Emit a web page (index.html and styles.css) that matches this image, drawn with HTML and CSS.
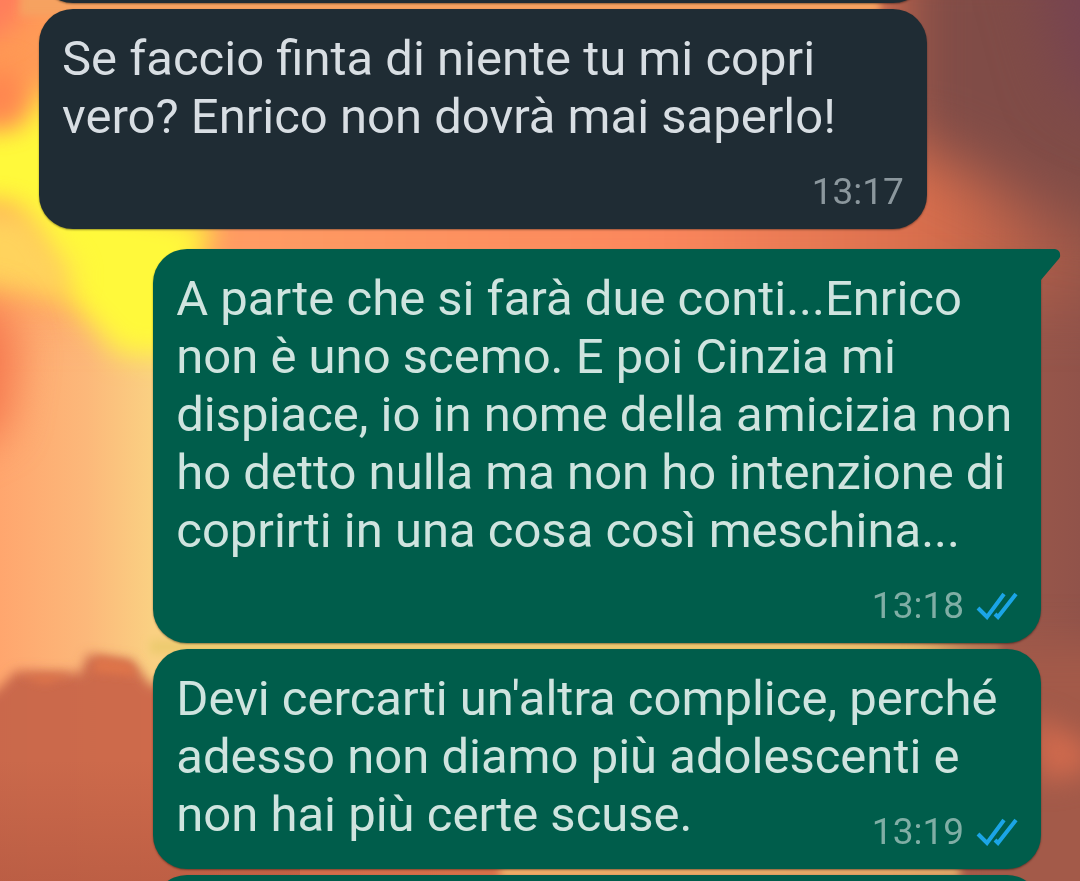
FILE: index.html
```html
<!DOCTYPE html>
<html lang="it">
<head>
<meta charset="utf-8">
<meta name="viewport" content="width=device-width, initial-scale=1">
<title>Chat</title>
<link rel="stylesheet" href="styles.css">
</head>
<body>
<svg class="wallpaper" viewBox="0 0 1080 881" preserveAspectRatio="none" aria-hidden="true">
  <defs>
    <linearGradient id="sky" x1="0" x2="1" y1="0" y2="0">
      <stop offset="0" stop-color="#ffa66e"/>
      <stop offset="0.08" stop-color="#fcb87a"/>
      <stop offset="0.14" stop-color="#fad082"/>
      <stop offset="0.45" stop-color="#f8d47c"/>
      <stop offset="0.75" stop-color="#f08458"/>
      <stop offset="0.93" stop-color="#9c584a"/>
      <stop offset="1" stop-color="#91534a"/>
    </linearGradient>
    <linearGradient id="band" x1="0" x2="1" y1="0" y2="0">
      <stop offset="0" stop-color="#ff9b50"/>
      <stop offset="0.25" stop-color="#ff9b63"/>
      <stop offset="0.6" stop-color="#fb865c"/>
      <stop offset="0.82" stop-color="#d66d4c"/>
      <stop offset="0.92" stop-color="#a55a49"/>
      <stop offset="1" stop-color="#80504a"/>
    </linearGradient>
    <linearGradient id="dusk" x1="0" x2="1" y1="0" y2="0">
      <stop offset="0" stop-color="#c9684c"/>
      <stop offset="0.5" stop-color="#d8704a"/>
      <stop offset="1" stop-color="#a85a46"/>
    </linearGradient>
    <linearGradient id="shade" x1="0" x2="0" y1="0" y2="1">
      <stop offset="0" stop-color="#a04a38" stop-opacity="0"/>
      <stop offset="1" stop-color="#a04a38" stop-opacity="0.35"/>
    </linearGradient>
    <filter id="b6" x="-20%" y="-20%" width="140%" height="140%"><feGaussianBlur stdDeviation="6"/></filter>
    <filter id="b4" x="-20%" y="-40%" width="140%" height="180%"><feGaussianBlur stdDeviation="4"/></filter>
    <filter id="b14" x="-60%" y="-60%" width="220%" height="220%" color-interpolation-filters="sRGB"><feGaussianBlur stdDeviation="14"/></filter>
    <filter id="b20" x="-60%" y="-60%" width="220%" height="220%" color-interpolation-filters="sRGB"><feGaussianBlur stdDeviation="20"/></filter>
    <filter id="b30" x="-60%" y="-60%" width="220%" height="220%" color-interpolation-filters="sRGB"><feGaussianBlur stdDeviation="30"/></filter>
  </defs>
  <rect width="1080" height="881" fill="url(#sky)"/>
  <rect x="-80" y="-80" width="1240" height="380" fill="url(#band)" filter="url(#b30)"/>
  <path d="M900-60H1160V230L1060 215L970 170L900 140Z" fill="#804c47" filter="url(#b30)"/>
  <path d="M1030-60H1160V130L1070 90Z" fill="#754351" filter="url(#b30)"/>
  <path d="M-40-40H60L10 30L-40 50Z" fill="#ff7d5c" filter="url(#b14)"/>
  <path d="M-50 130L20 125L45 80L100 200L215 225L195 270L180 355H120L50 280L15 205L-50 205Z" fill="#fff93b" filter="url(#b14)"/>
  <ellipse cx="0" cy="96" rx="22" ry="28" fill="#ff844f" filter="url(#b14)"/>
  <path d="M-30 205L30 215L75 275L60 298L-30 290Z" fill="#ffd35d" filter="url(#b14)"/>
  <path d="M-60 300L0 305L18 350L5 430L-60 460Z" fill="#f5784f" filter="url(#b20)"/>
  <rect x="20" y="-9" width="860" height="25" fill="#f6a260" filter="url(#b4)"/>
  <path d="M-30 705L-5 692L16 671L70 672L80 674L88 654L132 660L150 684L1110 850V920H-30Z" fill="url(#dusk)" filter="url(#b6)"/>
  <path d="M92 672L98 657L130 663L137 676ZM20 676L72 675L45 684Z" fill="#df7549" filter="url(#b4)"/>
  <rect y="760" width="300" height="121" fill="url(#shade)"/>
  <path d="M150 640H800L1000 646V654H150Z" fill="#edcb70" filter="url(#b4)"/>
  <path d="M950 643H1140V930H940Z" fill="#a35a49" filter="url(#b20)"/>
  <path d="M1030 715L1090 745V770L1040 782Z" fill="#d16a4d" filter="url(#b14)"/>
  <path d="M500 868H960V876H500Z" fill="#f9ce78" filter="url(#b4)"/>
</svg>

<main class="chat">
  <article class="bubble received earlier"></article>

  <article class="bubble received">
    <p class="text">Se faccio finta di niente tu mi copri vero? Enrico non dovrà mai saperlo!</p>
    <footer class="meta"><time datetime="13:17">13:17</time></footer>
  </article>

  <article class="bubble sent first">
    <svg class="tail" viewBox="0 0 20 32" aria-hidden="true"><path d="M0 0H14Q20 1 19 8Q18 10 16 12L0 31Z"/></svg>
    <p class="text">A parte che si farà due conti...Enrico non è uno scemo. E poi Cinzia mi dispiace, io in nome della amicizia non ho detto nulla ma non ho intenzione di coprirti in una cosa così meschina...</p>
    <footer class="meta">
      <time datetime="13:18">13:18</time>
      <svg class="ticks" viewBox="0 0 42 28" role="img" aria-label="Letto"><path d="M2 16L11 25L28 2M19 22L22 25L40 2"/></svg>
    </footer>
  </article>

  <article class="bubble sent compact">
    <div class="text">Devi cercarti un'altra complice, perché adesso non diamo più adolescenti e non hai più certe scuse.
      <footer class="meta">
        <time datetime="13:19">13:19</time>
        <svg class="ticks" viewBox="0 0 42 28" role="img" aria-label="Letto"><path d="M2 16L11 25L28 2M19 22L22 25L40 2"/></svg>
      </footer>
    </div>
  </article>

  <article class="bubble sent later"></article>
</main>
</body>
</html>
```
FILE: styles.css
```css
* {
  box-sizing: border-box;
}

body {
  margin: 0;
  font-family: Roboto, "Liberation Sans", sans-serif;
  background: #e98a5c;
}

.wallpaper {
  position: fixed;
  inset: 0;
  width: 100%;
  height: 100%;
  z-index: -1;
}

.chat {
  display: flex;
  flex-direction: column;
  gap: 6px;
  height: 100vh;
  overflow: hidden;
  padding: 0 39px;
}

.bubble {
  position: relative;
  flex: none;
  width: 88.6%;
  padding: 21px 23px 18px;
  border-radius: 34px;
  box-shadow: 0 1px 2px rgba(0, 0, 0, 0.4);
}

.received {
  align-self: flex-start;
  background: #1f2c34;
  color: #d8dee3;
}

.sent {
  align-self: flex-end;
  background: #005d4b;
  color: #cfe4df;
}

.first {
  margin-top: 14px;
  border-top-right-radius: 0;
}

.earlier {
  height: 100px;
  margin-top: -97px;
}

.later {
  height: 100px;
}

.text {
  display: flow-root;
  margin: 0;
  font-size: 49px;
  line-height: 58px;
}

.meta {
  display: flex;
  align-items: center;
  justify-content: flex-end;
  gap: 12px;
  height: 38px;
  margin-top: 27px;
  font-size: 37px;
  line-height: 38px;
  color: #8b979d;
}

.sent .meta {
  color: #80aea5;
}

.compact .meta {
  float: right;
}

.ticks {
  width: 42px;
  height: 28px;
  fill: none;
  stroke: #1ba5e6;
  stroke-width: 4;
}

.tail {
  position: absolute;
  top: 0;
  left: 100%;
  width: 20px;
  height: 32px;
  fill: #005d4b;
}
```
